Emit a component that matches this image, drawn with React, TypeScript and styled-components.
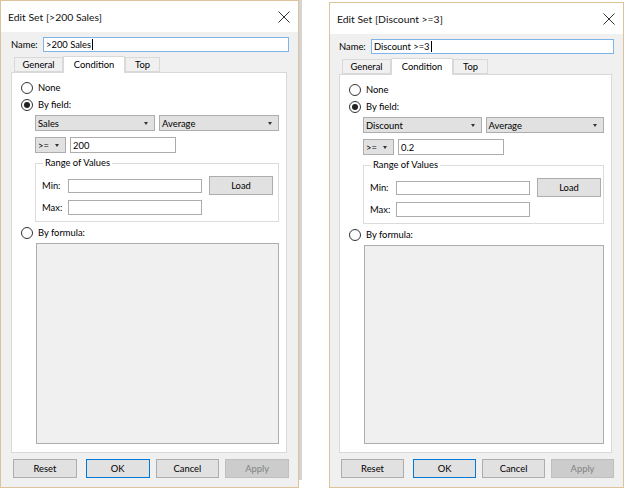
import React from "react";
import styled, { createGlobalStyle } from "styled-components";

const GlobalStyle = createGlobalStyle`
  html, body {
    margin: 0;
    padding: 0;
    background: #fff;
  }
  body {
    font-family: Lato, "Liberation Sans", sans-serif;
    font-size: 9.4px;
    color: #000;
  }
`;

const Page = styled.div`
  display: flex;
  align-items: flex-start;
  width: 626px;
  height: 489px;
  overflow: hidden;
  background: #fff;
`;

const Dialog = styled.div<{ $width: number; $top: number }>`
  box-sizing: border-box;
  display: flex;
  flex-direction: column;
  flex-shrink: 0;
  width: ${(p) => p.$width}px;
  height: ${(p) => 488 - p.$top}px;
  margin-top: ${(p) => p.$top}px;
  border: 1px solid #dcc39b;
  background: #f0f0f0;
`;

const Shadow = styled.div`
  flex-shrink: 0;
  width: 3px;
  height: 480px;
  margin-right: 27px;
  background: #d4d4d4;
`;

const TitleBar = styled.div`
  display: flex;
  align-items: center;
  justify-content: space-between;
  height: 31px;
  padding: 0 8px 0 7px;
  background: #fff;
`;

const Title = styled.span`
  font-size: 10.4px;
  color: #111;
`;

const Body = styled.div<{ $padLeft: number }>`
  flex: 1;
  display: flex;
  flex-direction: column;
  padding: 5px 9px 9px ${(p) => p.$padLeft}px;
`;

const NameRow = styled.div`
  display: flex;
  align-items: center;
  height: 15px;
`;

const Label = styled.span<{ $w?: number }>`
  flex-shrink: 0;
  width: ${(p) => (p.$w ? `${p.$w}px` : "auto")};
  white-space: nowrap;
`;

const TextBox = styled.div<{ $focus?: boolean; $w?: number; $h?: number }>`
  box-sizing: border-box;
  display: flex;
  align-items: center;
  flex: ${(p) => (p.$w ? "none" : 1)};
  width: ${(p) => (p.$w ? `${p.$w}px` : "auto")};
  height: ${(p) => p.$h ?? 15}px;
  padding: 0 2px;
  border: 1px solid ${(p) => (p.$focus ? "#7eb4ea" : "#acacac")};
  background: #fff;
  white-space: nowrap;
`;

const Caret = styled.span`
  display: inline-block;
  width: 1px;
  height: 11px;
  margin-left: 1px;
  background: #000;
`;

const TabStrip = styled.div`
  display: flex;
  align-items: flex-end;
  height: 17px;
  margin: 4px 0 -1px 3px;
  position: relative;
  z-index: 1;
`;

const Tab = styled.div<{ $w: number; $active?: boolean }>`
  box-sizing: border-box;
  display: flex;
  align-items: center;
  justify-content: center;
  width: ${(p) => p.$w}px;
  height: ${(p) => (p.$active ? 17 : 15)}px;
  margin-bottom: ${(p) => (p.$active ? 0 : 1)}px;
  border: 1px solid #d9d9d9;
  border-bottom: ${(p) => (p.$active ? "none" : "1px solid #d9d9d9")};
  background: ${(p) => (p.$active ? "#fff" : "#f0f0f0")};
  padding-bottom: ${(p) => (p.$active ? 2 : 0)}px;
`;

const Panel = styled.div`
  flex: 1;
  display: flex;
  flex-direction: column;
  margin-right: 2px;
  padding: 6px 7px 8px 9px;
  border: 1px solid #d9d9d9;
  background: #fff;
`;

const RadioRow = styled.div<{ $mt?: number }>`
  display: flex;
  align-items: center;
  gap: 5px;
  height: 17px;
  margin-top: ${(p) => p.$mt ?? 0}px;
`;

const RadioCircle = styled.span<{ $on?: boolean }>`
  box-sizing: border-box;
  display: flex;
  align-items: center;
  justify-content: center;
  width: 12px;
  height: 12px;
  border: 1px solid #333;
  border-radius: 50%;
  background: #fff;
  &::after {
    content: "";
    display: ${(p) => (p.$on ? "block" : "none")};
    width: 6px;
    height: 6px;
    border-radius: 50%;
    background: #222;
  }
`;

const Indent = styled.div`
  display: flex;
  flex-direction: column;
  padding-left: 14px;
`;

const FieldRow = styled.div<{ $mt: number }>`
  display: flex;
  gap: 4px;
  margin-top: ${(p) => p.$mt}px;
`;

const Combo = styled.div<{ $w?: number }>`
  box-sizing: border-box;
  display: flex;
  align-items: center;
  justify-content: space-between;
  flex: ${(p) => (p.$w ? "none" : 1)};
  width: ${(p) => (p.$w ? `${p.$w}px` : "auto")};
  height: 16px;
  padding: 0 6px 0 2px;
  border: 1px solid #adadad;
  background: #e1e1e1;
  &::after {
    content: "";
    border-left: 2.5px solid transparent;
    border-right: 2.5px solid transparent;
    border-top: 3px solid #333;
  }
`;

const Group = styled.fieldset`
  margin: 4px 0 0;
  padding: 7px 8px 6px 6px;
  border: 1px solid #dcdcdc;
  display: grid;
  grid-template-columns: 26px 141px 64px;
  grid-template-rows: 19px 15px;
  row-gap: 5px;
  align-items: center;
  min-width: 0;
`;

const Legend = styled.legend`
  margin-left: 1px;
  padding: 0 2px;
  line-height: 12px;
`;

const Button = styled.div<{ $primary?: boolean; $disabled?: boolean }>`
  box-sizing: border-box;
  display: flex;
  align-items: center;
  justify-content: center;
  width: 64px;
  height: 19px;
  border: 1px solid ${(p) => (p.$primary ? "#0078d7" : p.$disabled ? "#bfbfbf" : "#adadad")};
  background: ${(p) => (p.$disabled ? "#cccccc" : "#e1e1e1")};
  color: ${(p) => (p.$disabled ? "#838383" : "#000")};
`;

const Formula = styled.div`
  flex: 1;
  margin: 2px 0 0 15px;
  border: 1px solid #adadad;
  background: #f0f0f0;
`;

const ButtonRow = styled.div`
  display: flex;
  gap: 6px;
  margin-top: 6px;
  padding-left: 2px;
  & > :first-child {
    margin-right: 3px;
  }
`;

const CloseIcon = () => (
  <svg width="12" height="12" viewBox="0 0 12 12">
    <path d="M0.5 0.5 L11.5 11.5 M11.5 0.5 L0.5 11.5" stroke="#333" strokeWidth="1" fill="none" />
  </svg>
);

interface EditSetProps {
  width: number;
  top: number;
  padLeft: number;
  setName: string;
  field: string;
  value: string;
}

function EditSet({ width, top, padLeft, setName, field, value }: EditSetProps): React.ReactElement {
  return (
    <Dialog $width={width} $top={top}>
      <TitleBar>
        <Title>Edit Set [{setName}]</Title>
        <CloseIcon />
      </TitleBar>
      <Body $padLeft={padLeft}>
        <NameRow>
          <Label $w={32}>Name:</Label>
          <TextBox $focus>
            {setName}
            <Caret />
          </TextBox>
        </NameRow>
        <TabStrip>
          <Tab $w={49}>General</Tab>
          <Tab $w={62} $active>Condition</Tab>
          <Tab $w={35}>Top</Tab>
        </TabStrip>
        <Panel>
          <RadioRow>
            <RadioCircle />
            None
          </RadioRow>
          <RadioRow>
            <RadioCircle $on />
            By field:
          </RadioRow>
          <Indent>
            <FieldRow $mt={2}>
              <Combo>{field}</Combo>
              <Combo>Average</Combo>
            </FieldRow>
            <FieldRow $mt={6}>
              <Combo $w={31}>&gt;=</Combo>
              <TextBox $w={106} $h={16}>{value}</TextBox>
            </FieldRow>
            <Group>
              <Legend>Range of Values</Legend>
              <Label>Min:</Label>
              <TextBox $w={134} $h={14} />
              <Button>Load</Button>
              <Label>Max:</Label>
              <TextBox $w={134} />
            </Group>
          </Indent>
          <RadioRow $mt={2}>
            <RadioCircle />
            By formula:
          </RadioRow>
          <Formula />
        </Panel>
        <ButtonRow>
          <Button>Reset</Button>
          <Button $primary>OK</Button>
          <Button>Cancel</Button>
          <Button $disabled>Apply</Button>
        </ButtonRow>
      </Body>
    </Dialog>
  );
}

export default function App(): React.ReactElement {
  return (
    <>
      <GlobalStyle />
      <Page>
        <EditSet width={299} top={0} padLeft={10} setName=">200 Sales" field="Sales" value="200" />
        <Shadow />
        <EditSet width={295} top={2} padLeft={9} setName="Discount >=3" field="Discount" value="0.2" />
      </Page>
    </>
  );
}
